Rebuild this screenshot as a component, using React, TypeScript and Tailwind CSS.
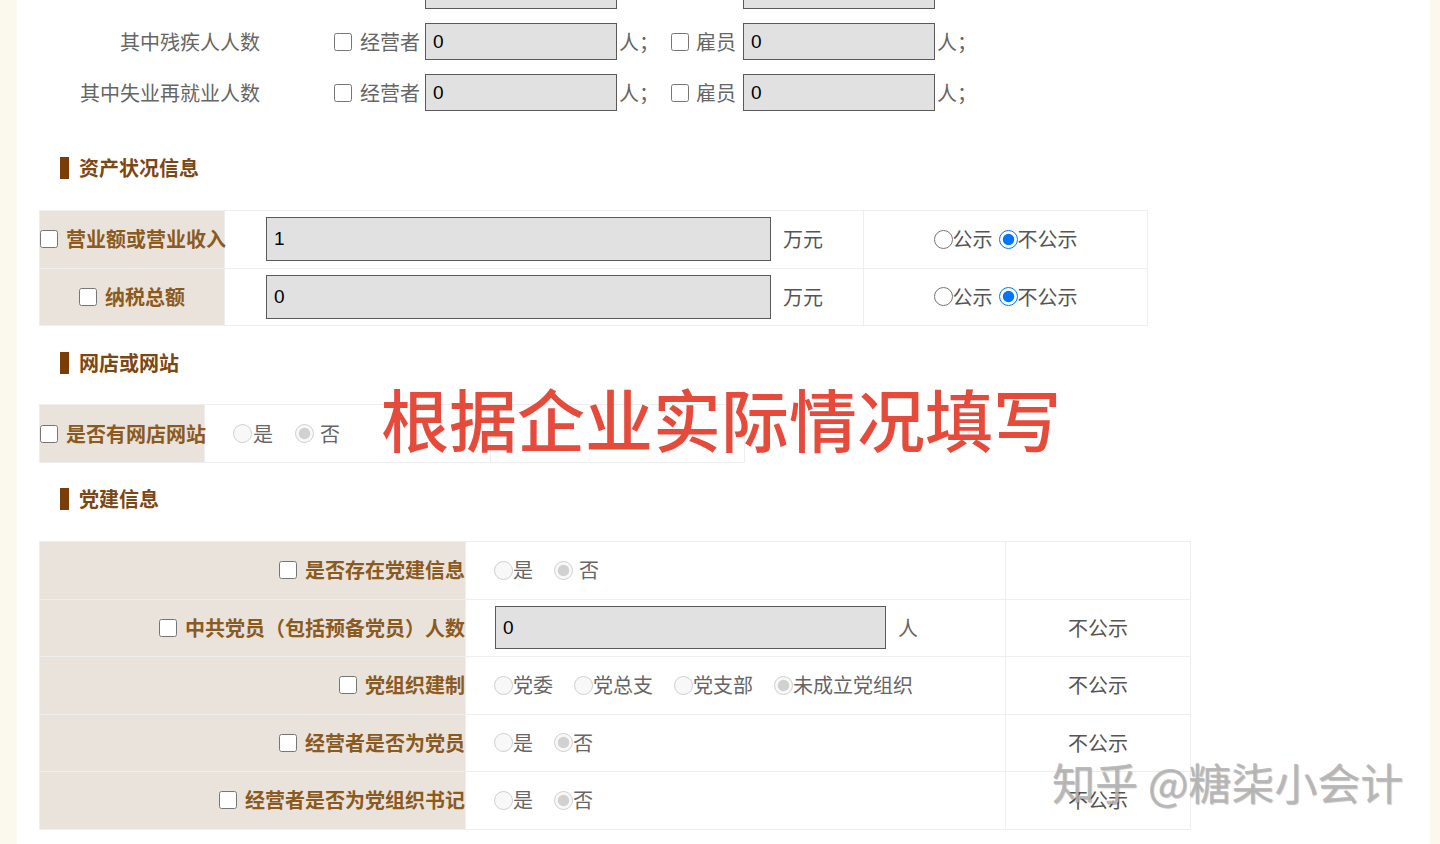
import React from 'react';

const LABEL_BG = 'bg-[#e9e3dc]';

function Check() {
  return <input type="checkbox" className="w-[18px] h-[18px] m-0 shrink-0" />;
}

function Radio({ checked = false, disabled = false }: { checked?: boolean; disabled?: boolean }) {
  return <input type="radio" checked={checked} disabled={disabled} readOnly className="w-[19px] h-[19px] m-0 shrink-0" />;
}

function Field({ value, className }: { value: string; className: string }) {
  return (
    <input
      value={value}
      readOnly
      className={`bg-[#e1e1e1] border border-[#5a5a5a] px-[7px] text-[19px] text-black font-['Liberation_Sans',sans-serif] outline-none ${className}`}
    />
  );
}

// 从业人数行（经营者 / 雇员）；partial = 滚动到顶部之外的那一行，只露出输入框底边
function CountRow({ label, partial = false }: { label: string; partial?: boolean }) {
  const txt = partial ? 'invisible' : '';
  return (
    <div className="flex items-center h-[51px] text-[20px] text-[#666]">
      <div className={`w-[221px] text-right whitespace-nowrap ${txt}`}>{label}</div>
      <div className="ml-[74px] flex items-center whitespace-nowrap">
        <span className={`flex ${txt}`}><Check /></span>
        <span className={`ml-[8px] ${txt}`}>经营者</span>
        <Field value={partial ? '' : '0'} className="ml-[5px] w-[192px] h-[37px]" />
        <span className={`ml-[2px] ${txt}`}>人；</span>
        <span className={`ml-[12px] flex ${txt}`}><Check /></span>
        <span className={`ml-[7px] ${txt}`}>雇员</span>
        <Field value={partial ? '' : '0'} className="ml-[7px] w-[192px] h-[37px]" />
        <span className={`ml-[2px] ${txt}`}>人；</span>
      </div>
    </div>
  );
}

function SectionTitle({ title, className }: { title: string; className: string }) {
  return (
    <div className={`flex items-center h-[40px] pl-[21px] ${className}`}>
      <span className="w-[9px] h-[22px] bg-[#7a3d05]" />
      <span className="ml-[10px] text-[20px] font-bold text-[#7b4714]">{title}</span>
    </div>
  );
}

function RowLabel({ text }: { text: string }) {
  return (
    <span className="inline-flex items-center gap-[8px] whitespace-nowrap text-[20px] font-bold text-[#8b5a1e]">
      <Check />
      {text}
    </span>
  );
}

const cell = 'border border-[#eeeeee] p-0';

export default function App() {
  const party = [
    { label: '是否存在党建信息', kind: 'yesno-space', right: '' },
    { label: '中共党员（包括预备党员）人数', kind: 'input', right: '不公示' },
    { label: '党组织建制', kind: 'org', right: '不公示' },
    { label: '经营者是否为党员', kind: 'yesno', right: '不公示' },
    { label: '经营者是否为党组织书记', kind: 'yesno', right: '不公示' },
  ];

  return (
    <div className="min-h-screen bg-[#fbf8ee] font-['Noto_Sans_CJK_SC','Noto_Sans',sans-serif] overflow-hidden">
      <div className="relative ml-[17px] mr-[10px] h-[844px] bg-white pl-[22px] overflow-hidden">
        {/* 人员情况 */}
        <div className="-mt-[35px]">
          <CountRow label="其中高校毕业生人数" partial />
          <CountRow label="其中残疾人人数" />
          <CountRow label="其中失业再就业人数" />
        </div>

        {/* 资产状况信息 */}
        <SectionTitle title="资产状况信息" className="mt-[30px]" />
        <table className="mt-[22px] table-fixed border-collapse w-[1109px]">
          <tbody>
            {[
              { label: '营业额或营业收入', value: '1' },
              { label: '纳税总额', value: '0' },
            ].map((r) => (
              <tr key={r.label} className="h-[57.5px]">
                <td className={`${cell} w-[185px] ${LABEL_BG} text-center`}>
                  <RowLabel text={r.label} />
                </td>
                <td className={`${cell} w-[639px]`}>
                  <div className="flex items-center pl-[41px]">
                    <Field value={r.value} className="w-[505px] h-[44px]" />
                    <span className="ml-[12px] text-[20px] text-[#555]">万元</span>
                  </div>
                </td>
                <td className={`${cell} text-center`}>
                  <span className="inline-flex items-center text-[20px] text-[#555] whitespace-nowrap">
                    <Radio />
                    <span>公示</span>
                    <span className="ml-[6px] flex"><Radio checked /></span>
                    <span>不公示</span>
                  </span>
                </td>
              </tr>
            ))}
          </tbody>
        </table>

        {/* 网店或网站 */}
        <SectionTitle title="网店或网站" className="mt-[17px]" />
        <table className="mt-[21px] table-fixed border-collapse w-[706px]">
          <tbody>
            <tr className="h-[58px]">
              <td className={`${cell} w-[165px] ${LABEL_BG} text-left`}>
                <RowLabel text="是否有网店网站" />
              </td>
              <td className={`${cell} w-[286px]`}>
                <div className="flex items-center pl-[28px] text-[20px] text-[#666]">
                  <Radio disabled />
                  <span className="ml-[1px]">是</span>
                  <span className="ml-[22px] flex"><Radio checked disabled /></span>
                  <span className="ml-[6px]">否</span>
                </div>
              </td>
              <td className={cell} />
            </tr>
          </tbody>
        </table>

        {/* 党建信息 */}
        <SectionTitle title="党建信息" className="mt-[16px]" />
        <table className="mt-[22px] table-fixed border-collapse w-[1152px]">
          <tbody>
            {party.map((r) => (
              <tr key={r.label} className="h-[57.5px]">
                <td className={`${cell} w-[426px] ${LABEL_BG} text-right`}>
                  <RowLabel text={r.label} />
                </td>
                <td className={`${cell} w-[540px]`}>
                  <div className="flex items-center pl-[28px] text-[20px] text-[#666] whitespace-nowrap">
                    {r.kind === 'input' && (
                      <>
                        <Field value="0" className="ml-[1px] w-[391px] h-[43px]" />
                        <span className="ml-[12px]">人</span>
                      </>
                    )}
                    {(r.kind === 'yesno' || r.kind === 'yesno-space') && (
                      <>
                        <Radio disabled />
                        <span>是</span>
                        <span className="ml-[21px] flex"><Radio checked disabled /></span>
                        <span className={r.kind === 'yesno-space' ? 'ml-[6px]' : ''}>否</span>
                      </>
                    )}
                    {r.kind === 'org' && (
                      <>
                        <Radio disabled />
                        <span>党委</span>
                        <span className="ml-[21px] flex"><Radio disabled /></span>
                        <span>党总支</span>
                        <span className="ml-[21px] flex"><Radio disabled /></span>
                        <span>党支部</span>
                        <span className="ml-[21px] flex"><Radio checked disabled /></span>
                        <span>未成立党组织</span>
                      </>
                    )}
                  </div>
                </td>
                <td className={`${cell} text-center text-[20px] text-[#555]`}>{r.right}</td>
              </tr>
            ))}
          </tbody>
        </table>

        {/* 标注文字 */}
        <div className="absolute left-[364px] top-[384px] text-[68px] leading-none font-medium text-[#e64a3a] whitespace-nowrap">
          根据企业实际情况填写
        </div>

        {/* 水印 */}
        <div className="absolute left-[1035px] top-[760px] text-[43px] leading-none text-[#b4b4b4]/90 whitespace-nowrap [text-shadow:1px_1px_1px_rgba(0,0,0,0.25)]">
          知乎 @糖柒小会计
        </div>
      </div>
    </div>
  );
}
